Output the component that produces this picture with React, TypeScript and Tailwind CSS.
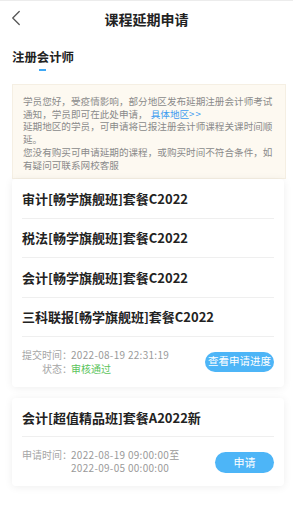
import { ChevronLeft } from "lucide-react";

const courses = [
  "审计[畅学旗舰班]套餐C2022",
  "税法[畅学旗舰班]套餐C2022",
  "会计[畅学旗舰班]套餐C2022",
  "三科联报[畅学旗舰班]套餐C2022",
];

const CourseRow = ({ name }: { name: string }) => (
  <div className="h-[39.5px] flex items-center border-b border-[#efefef] text-[13px] font-bold text-[#222] leading-none">
    {name}
  </div>
);

const App = () => {
  return (
    <div
      className="w-[293px] min-h-[507px] bg-white border-t-[1.5px] border-[#ececec]"
      style={{ fontFamily: '"Noto Sans CJK SC", "Noto Sans", sans-serif' }}
    >
      {/* header */}
      <div className="relative h-[36px] flex items-center justify-center">
        <ChevronLeft
          className="absolute left-[3px] top-[4px] w-[26px] h-[26px] text-[#555]"
          strokeWidth={1.2}
        />
        <div className="text-[14px] font-bold text-[#222] leading-none">课程延期申请</div>
      </div>

      <div className="px-3">
        {/* tab */}
        <div className="flex pt-[14px] h-[47px]">
          <div className="flex flex-col items-center">
            <div className="text-[12.4px] font-bold text-[#222] leading-[13px]">注册会计师</div>
            <div className="mt-[5px] w-[7px] h-[2px] bg-[#3ea8f5]" />
          </div>
        </div>

        {/* notice */}
        <div className="w-[274px] bg-[#fdf9f1] border border-[#f5efe3] px-[10px] pt-[10px] pb-[7px] text-[9.6px] leading-[12.7px] text-[#8a8a8a]">
          学员您好，受疫情影响，部分地区发布延期注册会计师考试通知，学员即可在此处申请，
          <span className="ml-[3px] text-[#3d9cf0]">
            具体地区<span className="tracking-[1px]">&gt;&gt;</span>
          </span>
          <br />
          延期地区的学员，可申请将已报注册会计师课程关课时间顺延。
          <br />
          您没有购买可申请延期的课程，或购买时间不符合条件，如有疑问可联系网校客服
        </div>

        {/* card 1 */}
        <div className="w-[272px] bg-white rounded-[4px] shadow-[0_1px_8px_rgba(0,0,0,0.07)] px-[10px]">
          {courses.map((c) => (
            <CourseRow key={c} name={c} />
          ))}
          <div className="flex items-center justify-between pt-[11px] pb-[12px]">
            <div className="text-[10px] leading-[13.3px] text-[#9a9a9a]">
              <div className="flex">
                <span className="w-[50px] shrink-0 whitespace-nowrap text-right text-[#a6a6a6]">提交时间：</span>
                <span className="-ml-[1px] tracking-[0.3px]">2022-08-19 22:31:19</span>
              </div>
              <div className="flex">
                <span className="w-[50px] shrink-0 whitespace-nowrap text-right text-[#a6a6a6]">状态：</span>
                <span className="-ml-[1px] text-[#5cc45c]">审核通过</span>
              </div>
            </div>
            <button className="h-[20px] w-[69px] rounded-full bg-[#4db5f7] text-white text-[10.5px] leading-none">
              查看申请进度
            </button>
          </div>
        </div>

        {/* card 2 */}
        <div className="mt-[11px] w-[272px] bg-white rounded-[4px] shadow-[0_1px_8px_rgba(0,0,0,0.07)] px-[10px]">
          <CourseRow name="会计[超值精品班]套餐A2022新" />
          <div className="flex items-center justify-between pt-[12px] pb-[11px]">
            <div className="flex text-[10px] leading-[12.7px] text-[#9a9a9a]">
              <span className="w-[50px] shrink-0 whitespace-nowrap text-right text-[#a6a6a6]">申请时间：</span>
              <div className="-ml-[1px] tracking-[0.3px]">
                <div>2022-08-19 09:00:00至</div>
                <div>2022-09-05 00:00:00</div>
              </div>
            </div>
            <button className="h-[21px] w-[59px] rounded-full bg-[#4db5f7] text-white text-[11px] leading-none">
              申请
            </button>
          </div>
        </div>
      </div>
    </div>
  );
};

export default App;
